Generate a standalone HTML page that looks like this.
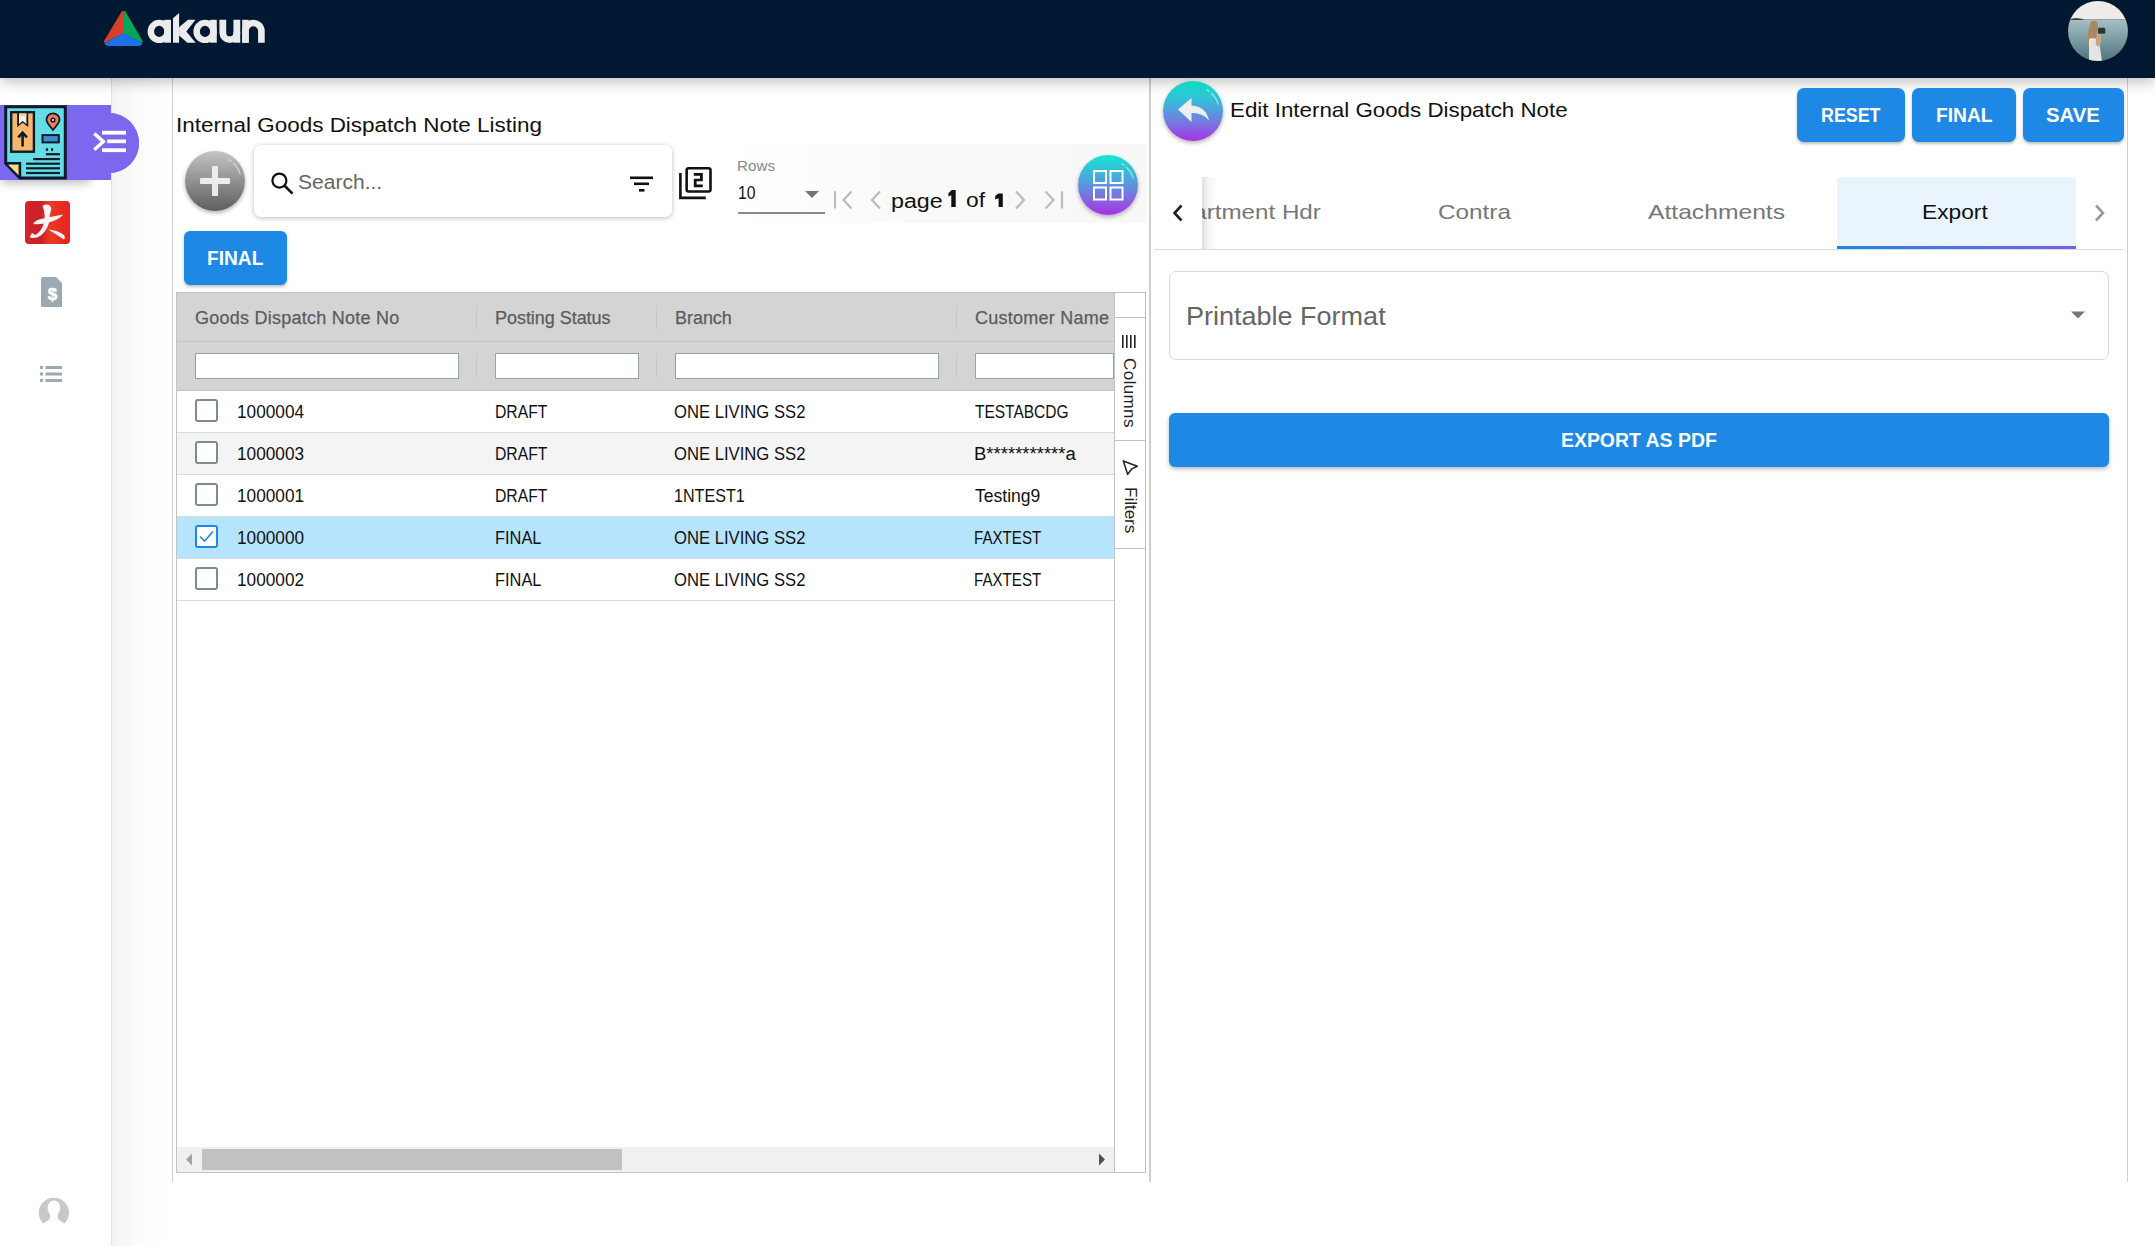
<!DOCTYPE html>
<html><head><meta charset="utf-8">
<style>
*{box-sizing:border-box;margin:0;padding:0}
html,body{width:2155px;height:1246px;overflow:hidden;background:#fff;font-family:"Liberation Sans",sans-serif}
.a{position:absolute}
.t{position:absolute;white-space:nowrap;line-height:1}
.hd{font-size:18px;color:#5c5c5c;-webkit-text-stroke:.25px #5c5c5c}
.cl{font-size:18px;color:#111;transform-origin:0 0}
</style></head><body>

<!-- background gradient strip right of sidebar -->
<div class="a" style="left:112px;top:78px;width:60px;height:1168px;background:linear-gradient(to right,#f4f4f4,#fbfbfb 40%,#fff)"></div>

<!-- left panel border -->
<div class="a" style="left:172px;top:78px;width:1px;height:1104px;background:#d0d0d0"></div>
<!-- split divider -->
<div class="a" style="left:1149px;top:78px;width:2px;height:1104px;background:#cfcfcf"></div>
<!-- right panel border -->
<div class="a" style="left:2127px;top:78px;width:1px;height:1104px;background:#d0d0d0"></div>

<!-- SIDEBAR -->
<div class="a" style="left:0;top:78px;width:112px;height:1168px;background:#fff;border-right:1px solid #e2e2e2"></div>

<!-- HEADER -->
<div class="a" style="left:0;top:0;width:2155px;height:78px;background:#011833;box-shadow:0 3px 14px rgba(0,0,0,.28)"></div>


<!-- LOGO -->
<svg class="a" style="left:0;top:0" width="300" height="78" viewBox="0 0 300 78">
  <g stroke-linejoin="round" stroke-width="2.2">
    <path d="M122.6,12 L122.9,32.2 L105,41.6 Z" fill="#d6402c" stroke="#d6402c"/>
    <path d="M124.4,12 L141.6,41.6 L124.1,32.2 Z" fill="#08a65c" stroke="#08a65c"/>
    <path d="M123.5,34.2 L141.2,43.6 Q139.8,45 137.5,45 L109.5,45 Q107.2,45 105.8,43.6 Z" fill="#1b72e8" stroke="#1b72e8"/>
  </g>
</svg>
<svg class="a" style="left:0;top:0" width="300" height="78" viewBox="0 0 300 78">
  <g fill="#ebebeb">
    <path fill-rule="evenodd" d="M147.6,31.4 A11.7,11.7 0 1 0 171,31.4 A11.7,11.7 0 1 0 147.6,31.4 Z M154.1,31.4 A5.1,5.6 0 1 0 164.3,31.4 A5.1,5.6 0 1 0 154.1,31.4 Z"/>
    <rect x="164.2" y="19.8" width="6.8" height="22.9"/>
    <path d="M173,18.2 L179.1,13 L179.1,42.7 L173,42.7 Z"/>
    <path d="M179.1,27.3 L187.9,19.8 L195.5,19.8 L186.3,31.4 L195.7,42.7 L187.3,42.7 L179.1,35.5 Z"/>
    <path fill-rule="evenodd" d="M193.4,31.4 A11.7,11.7 0 1 0 216.8,31.4 A11.7,11.7 0 1 0 193.4,31.4 Z M199.9,31.4 A5.1,5.6 0 1 0 210.1,31.4 A5.1,5.6 0 1 0 199.9,31.4 Z"/>
    <rect x="210.1" y="19.8" width="6.7" height="22.9"/>
    <path d="M222.8,19.8 V32.7 A7,7 0 0 0 236.85,32.7 V19.8" fill="none" stroke="#ebebeb" stroke-width="6.8"/>
    <rect x="233.45" y="32" width="6.8" height="10.7"/>
    <path d="M245.45,42.7 V31 A7.97,7.97 0 0 1 261.4,31 V42.7" fill="none" stroke="#ebebeb" stroke-width="6.6"/>
    <rect x="242.2" y="19.8" width="6.5" height="22.9"/>
  </g>
</svg>

<!-- AVATAR -->
<svg class="a" style="left:2068px;top:1px" width="60" height="60" viewBox="0 0 60 60">
  <defs>
    <clipPath id="avc"><circle cx="30" cy="30" r="30"/></clipPath>
    <linearGradient id="sea" x1="0" y1="0" x2="0" y2="1"><stop offset="0" stop-color="#a7bec3"/><stop offset=".45" stop-color="#7e9ea5"/><stop offset="1" stop-color="#4e737c"/></linearGradient>
  </defs>
  <g clip-path="url(#avc)">
    <rect x="0" y="0" width="60" height="18.5" fill="#efebe7"/>
    <rect x="0" y="18.5" width="60" height="42" fill="url(#sea)"/>
    <path d="M1,19 Q6,16.3 10,17.2 Q14,17.5 16,19 Z" fill="#2f4744"/>
    <path d="M23,20.5 Q27,18.5 29.5,21.5 L30,27 L27.5,39 L23,47 L19.5,45 Q19,31 23,20.5 Z" fill="#a8895f"/>
    <path d="M21,38 Q26,35 31,40 L34,60 H21 Z" fill="#e6e4e2"/>
    <path d="M29,31 L32.6,31.5 L33.5,41 L30,46 L27.5,43 Z" fill="#c9a183"/>
    <rect x="30" y="26.8" width="7.3" height="6" rx="1.5" fill="#263638"/>
  </g>
</svg>
</div>

<!-- SIDEBAR ITEMS -->
<div class="a" style="left:79px;top:113px;width:60px;height:60px;border-radius:50%;background:#7b68ee"></div>
<div class="a" style="left:0;top:110px;width:92px;height:70px;box-shadow:0 5px 9px -2px rgba(0,0,0,.28)"></div>
<div class="a" style="left:0;top:105px;width:111px;height:75px;background:#7b68ee"></div>
<div class="a" style="left:79px;top:113px;width:60px;height:60px;border-radius:50%;background:#7b68ee"></div>
<svg class="a" style="left:0;top:100px" width="140" height="85" viewBox="0 100 140 85">
  <!-- doc -->
  <path d="M5.7,106.7 H65.3 V178.1 H19.9 L5.7,163.3 Z" fill="#66dde5" stroke="#0d1b2a" stroke-width="3" stroke-linejoin="miter"/>
  <path d="M7.9,164.6 H19.4 V176 Z" fill="#f9d98a"/>
  <path d="M5.7,163.3 H19.9 V178.1" fill="none" stroke="#0d1b2a" stroke-width="2.6"/>
  <rect x="11.2" y="112.2" width="22.7" height="39.5" fill="#f8b76e" stroke="#0d1b2a" stroke-width="2.4"/>
  <path d="M17.2,113 H28.2 V127 L22.7,122.8 L17.2,127 Z" fill="#0d1b2a"/>
  <path d="M19,113.5 H26.4 V124 L22.7,121 L19,124 Z" fill="#fbefd5"/>
  <rect x="19" y="113.5" width="7.4" height="2.6" fill="#fcd884"/>
  <path d="M22.6,146.5 V134" stroke="#0d1b2a" stroke-width="2.6"/>
  <path d="M18.3,137.3 L22.6,132.6 L26.9,137.3" fill="none" stroke="#0d1b2a" stroke-width="2.6"/>
  <path d="M53,130 C50,126 46.5,123 46.5,119.8 A6.5,6.5 0 0 1 59.5,119.8 C59.5,123 56,126 53,130 Z" fill="#f07c5a" stroke="#0d1b2a" stroke-width="1.8"/>
  <circle cx="53" cy="120" r="2.6" fill="#0d1b2a"/><circle cx="53" cy="120" r="1" fill="#fff"/>
  <rect x="42.5" y="135.1" width="16.3" height="7.3" fill="#3d8bd4" stroke="#0d1b2a" stroke-width="2"/>
  <rect x="45.9" y="148.3" width="2.2" height="2.6" fill="#0d1b2a"/><rect x="51" y="148.3" width="2.2" height="2.6" fill="#0d1b2a"/>
  <g fill="#0d1b2a">
  <rect x="45.9" y="153.1" width="14.1" height="2.2"/>
  <rect x="33.1" y="158" width="26.9" height="2.2"/>
  <rect x="26" y="162.6" width="34" height="2.2"/>
  <rect x="26" y="167.2" width="34" height="2.2"/>
  <rect x="26" y="171.9" width="34" height="2.2"/>
  </g>
  <!-- menu icon -->
  <path d="M94.2,133.5 L103.4,141.6 L94.2,149.8" fill="none" stroke="#fff" stroke-width="3.4"/>
  <rect x="102" y="130.8" width="24" height="3.8" fill="#fff"/>
  <rect x="107.2" y="139.5" width="18.8" height="3.7" fill="#fff"/>
  <rect x="102" y="148.3" width="24" height="3.8" fill="#fff"/>
</svg>

<!-- red app icon -->
<svg class="a" style="left:25px;top:201px" width="45" height="43" viewBox="0 0 45 43">
  <defs><linearGradient id="rg" x1="0" x2="1"><stop offset="0" stop-color="#d4232b"/><stop offset=".35" stop-color="#c9202a"/><stop offset=".55" stop-color="#ea3a25"/><stop offset="1" stop-color="#e8221f"/></linearGradient></defs>
  <rect x="0" y="0" width="45" height="43" rx="4" fill="url(#rg)"/>
  <g fill="#f4f2f2">
    <path d="M17.5,5 Q21,2.6 24.2,4.2 Q27.3,6.5 25.8,10 Q24.6,13 24.6,18 Q23.6,28 16,34.5 Q11,37.8 5.3,36.8 Q4.4,35.6 5.8,34 Q6.8,31.6 7.6,32.2 Q8.6,34 11.2,33.6 Q17.6,29 19.4,20 Q20.4,12 17.5,5 Z"/>
    <path d="M8.2,23 Q9.6,19.4 16,18 Q28,15.2 38.3,13.6 Q33.5,19.2 24,21.6 Q15,24 8.2,23 Z"/>
    <path d="M23.2,28.4 Q33,29.2 39.2,34.2 Q40.8,38.2 38.4,38.3 Q31,33 23.2,28.4 Z"/>
  </g>
</svg>

<!-- $ doc icon -->
<svg class="a" style="left:41px;top:277px" width="21" height="30" viewBox="0 0 21 30">
  <path d="M1.5,0 H15 L21,6 V30 H1.5 Q0,30 0,28.5 V1.5 Q0,0 1.5,0 Z" fill="#9aa9b3"/>
  <text x="11.5" y="23" font-family="Liberation Sans" font-weight="700" font-size="17" fill="#fff" stroke="#fff" stroke-width=".5" text-anchor="middle">$</text>
</svg>

<!-- list icon -->
<svg class="a" style="left:40px;top:366px" width="22" height="17" viewBox="0 0 22 17">
  <g fill="#9aa9b3">
    <rect x="0" y="0" width="3" height="3"/><rect x="5.5" y="0" width="16.5" height="3"/>
    <rect x="0" y="6.5" width="3" height="3"/><rect x="5.5" y="6.5" width="16.5" height="3"/>
    <rect x="0" y="13" width="3" height="3"/><rect x="5.5" y="13" width="16.5" height="3"/>
  </g>
</svg>

<!-- user icon -->
<svg class="a" style="left:38px;top:1196px" width="32" height="32" viewBox="0 0 32 32">
  <circle cx="15.9" cy="16.8" r="15.1" fill="#c8c8c8"/>
  <rect x="0" y="27.3" width="32" height="5" fill="#fff"/>
  <ellipse cx="15.9" cy="12" rx="6.35" ry="7.4" fill="#fff"/>
  <path d="M11.6,15 L20.2,15 L19.6,21 L20.6,23.8 L27.5,27.9 L4.3,27.9 L11.2,23.8 L12.2,21 Z" fill="#fff"/>
</svg>

<!-- LEFT PANEL CONTENT -->
<div class="t" style="left:175.9px;top:115px;font-size:20px;color:#111;transform-origin:0 0;transform:scaleX(1.1235)">Internal Goods Dispatch Note Listing</div>

<!-- plus button -->
<div class="a" style="left:185px;top:151px;width:60px;height:60px;border-radius:50%;background:linear-gradient(#c4c4c4,#5e5e5e);box-shadow:0 2px 4px rgba(0,0,0,.3)">
  <div class="a" style="left:15px;top:27px;width:30px;height:5.5px;background:#ececec;border-radius:1px"></div>
  <div class="a" style="left:27.4px;top:15px;width:5.5px;height:30px;background:#ececec;border-radius:1px"></div>
</div>
<svg class="a" style="left:185px;top:151px" width="60" height="60" viewBox="0 0 60 60"><path d="M43.5,8.6 A25.5,25.5 0 0 1 55.4,23.6" fill="none" stroke="rgba(255,255,255,.55)" stroke-width="1.2" stroke-dasharray="3.5 2.2 40"/></svg>

<!-- search box -->
<div class="a" style="left:254px;top:145px;width:418px;height:72px;background:#fff;border-radius:7px;box-shadow:0 1px 5px rgba(0,0,0,.28)"></div>
<svg class="a" style="left:270px;top:171px" width="26" height="26" viewBox="0 0 26 26"><circle cx="9.4" cy="9.6" r="7" fill="none" stroke="#111" stroke-width="2.2"/><path d="M14.6,14.8 L22.5,22.6" stroke="#111" stroke-width="2.6"/></svg>
<div class="t" style="left:297.95px;top:172px;font-size:20px;color:#666;transform-origin:0 0;transform:scaleX(1.0519)">Search...</div>
<svg class="a" style="left:628px;top:175px" width="28" height="20" viewBox="0 0 28 20"><g fill="#111"><rect x="2" y="1.5" width="23" height="2.6"/><rect x="6" y="7.5" width="15" height="2.6"/><rect x="11" y="14" width="5.5" height="2.6"/></g></svg>
<!-- filter_2 icon -->
<svg class="a" style="left:678px;top:165px" width="36" height="36" viewBox="0 0 36 36"><g fill="none" stroke="#111" stroke-width="2.6"><path d="M2.4,8 V32.9 H27.8"/><rect x="8.65" y="3.2" width="23.85" height="23.3" rx="2"/></g><path d="M15.8,8.1 H24.8 V16.3 H18.6 V19.6 H24.8 V22.3 H15.8 V13.7 H22 V10.8 H15.8 Z" fill="#111"/></svg>

<!-- FINAL button (left) -->
<div class="a" style="left:184px;top:231px;width:103px;height:54px;background:#1e88e5;border-radius:6px;box-shadow:0 2px 3px rgba(0,0,0,.25)"></div>
<div class="t" style="left:207.09px;top:247px;font-size:21px;font-weight:700;color:#fff;transform-origin:0 0;transform:scaleX(0.9117)">FINAL</div>

<!-- paginator -->
<div class="a" style="left:734px;top:144px;width:412px;height:79px;background:linear-gradient(to right,#fff,#f9f9f9 45%,#f8f8f8)"></div>
<div class="t" style="left:737.41px;top:159px;font-size:14px;color:#888;transform-origin:0 0;transform:scaleX(1.0853)">Rows</div>
<div class="t" style="left:737.67px;top:183px;font-size:19px;color:#111;transform-origin:0 0;transform:scaleX(0.8250)">10</div>
<svg class="a" style="left:804px;top:190px" width="16" height="9" viewBox="0 0 16 9"><path d="M1,1 H15 L8,8 Z" fill="#757575"/></svg>
<div class="a" style="left:738px;top:212px;width:87px;height:2px;background:#8a8a8a"></div>
<svg class="a" style="left:830px;top:188px" width="240" height="24" viewBox="0 0 240 24">
  <g fill="none" stroke="#bbb" stroke-width="2.2">
    <path d="M5,3.3 V20.5"/><path d="M21.5,3.6 L13.5,12 L21.5,20.4"/>
    <path d="M50,3.6 L42,12 L50,20.4"/>
    <path d="M186,3.6 L194,12 L186,20.4"/>
    <path d="M215.5,3.6 L223.5,12 L215.5,20.4"/><path d="M232,3.3 V20.5"/>
  </g>
</svg>
<div class="t" style="left:890.84px;top:191px;font-size:20px;color:#111;transform-origin:0 0;transform:scaleX(1.1628)">page</div>
<svg class="a" style="left:0;top:0;overflow:visible" width="1" height="1"><path d="M948.4,193.2 L951.8,190 H955.7 V207 H951.3 V195.2 L948.4,196.4 Z" fill="#111"/></svg>
<div class="t" style="left:965.56px;top:190px;font-size:20px;color:#111;transform-origin:0 0;transform:scaleX(1.1375)">of</div>
<svg class="a" style="left:0;top:0;overflow:visible" width="1" height="1"><path d="M995.2,196 L998.3,193.4 H1002.8 V207 H998.6 V198.2 L995.2,199.4 Z" fill="#111"/></svg>

<!-- grid circle -->
<div class="a" style="left:1078px;top:155px;width:60px;height:60px;border-radius:50%;background:linear-gradient(#12e8d0,#4aa7dc 40%,#7d6fe0 70%,#a930e6);box-shadow:0 2px 4px rgba(0,0,0,.3)"></div>
<svg class="a" style="left:1078px;top:155px" width="60" height="60" viewBox="0 0 60 60">
  <g fill="none" stroke="#fff" stroke-width="2"><rect x="16" y="16" width="12" height="12"/><rect x="32.5" y="16" width="12" height="12"/><rect x="16" y="32.5" width="12" height="12"/><rect x="32.5" y="32.5" width="12" height="12"/></g>
  <path d="M43.5,8.6 A25.5,25.5 0 0 1 55.4,23.6" fill="none" stroke="rgba(255,255,255,.55)" stroke-width="1.2" stroke-dasharray="3.5 2.2 40"/>
</svg>

<!-- TABLE -->
<div class="a" style="left:176px;top:292px;width:970px;height:881px;border:1px solid #bdc3c7;background:#fff"></div>
<div class="a" style="left:177px;top:293px;width:937px;height:97px;background:#d4d4d4"></div>
<div class="a" style="left:177px;top:341px;width:937px;height:1px;background:#bdc3c7"></div>
<div class="a" style="left:177px;top:390px;width:937px;height:1px;background:#bdc3c7"></div>
<div class="a" style="left:476px;top:305px;width:1px;height:24px;background:#c4c8ca"></div>
<div class="a" style="left:476px;top:354px;width:1px;height:24px;background:#c4c8ca"></div>
<div class="a" style="left:656px;top:305px;width:1px;height:24px;background:#c4c8ca"></div>
<div class="a" style="left:656px;top:354px;width:1px;height:24px;background:#c4c8ca"></div>
<div class="a" style="left:956px;top:305px;width:1px;height:24px;background:#c4c8ca"></div>
<div class="a" style="left:956px;top:354px;width:1px;height:24px;background:#c4c8ca"></div>
<div class="t hd" style="left:195px;top:309px;letter-spacing:0.25px">Goods Dispatch Note No</div>
<div class="t hd" style="left:495px;top:309px;letter-spacing:-0.04px">Posting Status</div>
<div class="t hd" style="left:675px;top:309px;letter-spacing:-0.04px">Branch</div>
<div class="t hd" style="left:975px;top:309px;letter-spacing:0.25px">Customer Name</div>
<div class="a" style="left:195px;top:353px;width:264px;height:26px;background:#fff;border:1px solid #95a5a6"></div>
<div class="a" style="left:495px;top:353px;width:144px;height:26px;background:#fff;border:1px solid #95a5a6"></div>
<div class="a" style="left:675px;top:353px;width:264px;height:26px;background:#fff;border:1px solid #95a5a6"></div>
<div class="a" style="left:975px;top:353px;width:139px;height:26px;background:#fff;border:1px solid #95a5a6"></div>
<div class="a" style="left:177px;top:391px;width:937px;height:41px;background:#fff"></div>
<div class="a" style="left:177px;top:432px;width:937px;height:1px;background:#d9dcde"></div>
<div class="a" style="left:195px;top:399px;width:23px;height:23px;border:2px solid #7f8c8d;border-radius:3px;background:#fff"></div>
<div class="t cl" style="left:237.04px;top:403px;transform:scaleX(0.9565)">1000004</div>
<div class="t cl" style="left:494.63px;top:403px;transform:scaleX(0.8729)">DRAFT</div>
<div class="t cl" style="left:673.68px;top:403px;transform:scaleX(0.9250)">ONE LIVING SS2</div>
<div class="t cl" style="left:975.30px;top:403px;transform:scaleX(0.8602)">TESTABCDG</div>
<div class="a" style="left:177px;top:433px;width:937px;height:41px;background:#f4f4f4"></div>
<div class="a" style="left:177px;top:474px;width:937px;height:1px;background:#d9dcde"></div>
<div class="a" style="left:195px;top:441px;width:23px;height:23px;border:2px solid #7f8c8d;border-radius:3px;background:#fff"></div>
<div class="t cl" style="left:237.04px;top:445px;transform:scaleX(0.9565)">1000003</div>
<div class="t cl" style="left:494.63px;top:445px;transform:scaleX(0.8729)">DRAFT</div>
<div class="t cl" style="left:673.68px;top:445px;transform:scaleX(0.9250)">ONE LIVING SS2</div>
<div class="t cl" style="left:974.27px;top:445px;transform:scaleX(1.0276)">B***********a</div>
<div class="a" style="left:177px;top:475px;width:937px;height:41px;background:#fff"></div>
<div class="a" style="left:177px;top:516px;width:937px;height:1px;background:#d9dcde"></div>
<div class="a" style="left:195px;top:483px;width:23px;height:23px;border:2px solid #7f8c8d;border-radius:3px;background:#fff"></div>
<div class="t cl" style="left:237.04px;top:487px;transform:scaleX(0.9565)">1000001</div>
<div class="t cl" style="left:494.63px;top:487px;transform:scaleX(0.8729)">DRAFT</div>
<div class="t cl" style="left:673.71px;top:487px;transform:scaleX(0.8948)">1NTEST1</div>
<div class="t cl" style="left:975.30px;top:487px;transform:scaleX(0.9742)">Testing9</div>
<div class="a" style="left:177px;top:517px;width:937px;height:41px;background:#b7e4fd"></div>
<div class="a" style="left:177px;top:558px;width:937px;height:1px;background:#d9dcde"></div>
<div class="a" style="left:195px;top:525px;width:23px;height:23px;border:2px solid #1e88e5;border-radius:3px;background:#fff"></div>
<svg class="a" style="left:195px;top:525px" width="23" height="23" viewBox="0 0 23 23"><path d="M5,11.5 L9.5,16 L18,6.5" fill="none" stroke="#1e88e5" stroke-width="1.6"/></svg>
<div class="t cl" style="left:237.04px;top:529px;transform:scaleX(0.9565)">1000000</div>
<div class="t cl" style="left:494.59px;top:529px;transform:scaleX(0.9100)">FINAL</div>
<div class="t cl" style="left:673.68px;top:529px;transform:scaleX(0.9250)">ONE LIVING SS2</div>
<div class="t cl" style="left:974.46px;top:529px;transform:scaleX(0.8405)">FAXTEST</div>
<div class="a" style="left:177px;top:559px;width:937px;height:41px;background:#fff"></div>
<div class="a" style="left:177px;top:600px;width:937px;height:1px;background:#d9dcde"></div>
<div class="a" style="left:195px;top:567px;width:23px;height:23px;border:2px solid #7f8c8d;border-radius:3px;background:#fff"></div>
<div class="t cl" style="left:237.04px;top:571px;transform:scaleX(0.9565)">1000002</div>
<div class="t cl" style="left:494.59px;top:571px;transform:scaleX(0.9100)">FINAL</div>
<div class="t cl" style="left:673.68px;top:571px;transform:scaleX(0.9250)">ONE LIVING SS2</div>
<div class="t cl" style="left:974.46px;top:571px;transform:scaleX(0.8405)">FAXTEST</div>

<div class="a" style="left:1114px;top:293px;width:1px;height:879px;background:#bdc3c7"></div>
<div class="a" style="left:1115px;top:317px;width:30px;height:1px;background:#bdc3c7"></div>
<div class="a" style="left:1115px;top:440px;width:30px;height:1px;background:#bdc3c7"></div>
<div class="a" style="left:1115px;top:548px;width:30px;height:1px;background:#bdc3c7"></div>
<svg class="a" style="left:1120px;top:333px" width="20" height="18" viewBox="0 0 20 18"><g fill="#222"><rect x="2" y="2" width="1.6" height="13"/><rect x="6" y="2" width="1.6" height="13"/><rect x="10" y="2" width="1.6" height="13"/><rect x="14" y="2" width="1.6" height="13"/></g></svg>
<div class="t" style="left:1138px;top:358px;font-size:17px;color:#222;letter-spacing:.4px;transform-origin:0 0;transform:rotate(90deg)">Columns</div>
<svg class="a" style="left:1120px;top:458px" width="20" height="20" viewBox="0 0 20 20"><path d="M3.3,3 L17.3,8.3 L12.2,10.6 L7.6,16.2 Z" fill="none" stroke="#222" stroke-width="1.5" stroke-linejoin="round"/></svg>
<div class="t" style="left:1139px;top:487px;font-size:17px;color:#222;transform-origin:0 0;transform:rotate(90deg)">Filters</div>

<!-- h scrollbar -->
<div class="a" style="left:177px;top:1147px;width:937px;height:25px;background:#f0f0f0"></div>
<div class="a" style="left:202px;top:1149px;width:420px;height:21px;background:#c1c1c1"></div>
<svg class="a" style="left:184px;top:1152px" width="10" height="15" viewBox="0 0 10 15"><path d="M8,1.5 V13.5 L2,7.5 Z" fill="#a3a3a3"/></svg>
<svg class="a" style="left:1097px;top:1152px" width="10" height="15" viewBox="0 0 10 15"><path d="M2,1.5 V13.5 L8,7.5 Z" fill="#505050"/></svg>

<!-- RIGHT PANEL -->
<div class="a" style="left:1163px;top:81px;width:60px;height:60px;border-radius:50%;background:linear-gradient(#0fd9bf,#2cc8d6 25%,#4aa6de 45%,#7877e0 70%,#a930e6);box-shadow:0 2px 4px rgba(0,0,0,.3)"></div>
<svg class="a" style="left:1163px;top:81px" width="60" height="60" viewBox="0 0 60 60">
  <path d="M15,28.5 L28.5,17 V24.5 Q43,25.5 46,39.5 Q40,31.5 28.5,32 V41 Z" fill="#efefef"/>
  <path d="M43.5,8.6 A25.5,25.5 0 0 1 55.4,23.6" fill="none" stroke="rgba(255,255,255,.55)" stroke-width="1.2" stroke-dasharray="3.5 2.2 40"/>
</svg>
<div class="t" style="left:1229.87px;top:99px;font-size:21px;color:#111;transform-origin:0 0;transform:scaleX(1.0635)">Edit Internal Goods Dispatch Note</div>

<div class="a" style="left:1797px;top:88px;width:108px;height:54px;background:#1e88e5;border-radius:7px;box-shadow:0 2px 3px rgba(0,0,0,.25)"></div>
<div class="a" style="left:1912px;top:88px;width:104px;height:54px;background:#1e88e5;border-radius:7px;box-shadow:0 2px 3px rgba(0,0,0,.25)"></div>
<div class="a" style="left:2023px;top:88px;width:101px;height:54px;background:#1e88e5;border-radius:7px;box-shadow:0 2px 3px rgba(0,0,0,.25)"></div>
<div class="t" style="left:1820.55px;top:104px;font-size:21px;font-weight:700;color:#fff;transform-origin:0 0;transform:scaleX(0.8493)">RESET</div>
<div class="t" style="left:1935.69px;top:104px;font-size:21px;font-weight:700;color:#fff;transform-origin:0 0;transform:scaleX(0.9133)">FINAL</div>
<div class="t" style="left:2046.03px;top:104px;font-size:21px;font-weight:700;color:#fff;transform-origin:0 0;transform:scaleX(0.9685)">SAVE</div>

<!-- tabs -->
<div class="a" style="left:1154px;top:249px;width:970px;height:1px;background:#dcdcdc"></div>
<div class="a" style="left:1837px;top:177px;width:239px;height:69px;background:#e9f4fd"></div>
<div class="a" style="left:1837px;top:246px;width:239px;height:3px;background:linear-gradient(to right,#1e88e5,#7b5ce8)"></div>
<div class="t" style="left:1149.15px;top:201px;font-size:21px;color:#777;transform-origin:0 0;transform:scaleX(1.1500);clip-path:inset(-5px -5px -5px 46px)">Department Hdr</div>
<div class="t" style="left:1438.34px;top:201px;font-size:21px;color:#777;transform-origin:0 0;transform:scaleX(1.1581)">Contra</div>
<div class="t" style="left:1648.00px;top:201px;font-size:21px;color:#777;transform-origin:0 0;transform:scaleX(1.1741)">Attachments</div>
<div class="t" style="left:1922.33px;top:201px;font-size:21px;color:#111;transform-origin:0 0;transform:scaleX(1.0831)">Export</div>
<div class="a" style="left:1151px;top:177px;width:51px;height:72px;background:#fff"></div>
<div class="a" style="left:1202px;top:177px;width:16px;height:72px;background:linear-gradient(to right,rgba(0,0,0,.13),rgba(0,0,0,.04) 40%,rgba(0,0,0,0))"></div>
<svg class="a" style="left:1168px;top:202px" width="20" height="22" viewBox="0 0 20 22"><path d="M13.5,3.5 L6.5,11 L13.5,18.5" fill="none" stroke="#222" stroke-width="2.6"/></svg>
<svg class="a" style="left:2090px;top:202px" width="20" height="22" viewBox="0 0 20 22"><path d="M6,3.5 L13,11 L6,18.5" fill="none" stroke="#999" stroke-width="2.6"/></svg>

<!-- printable format -->
<div class="a" style="left:1169px;top:271px;width:940px;height:89px;border:1px solid #dadada;border-radius:7px;background:#fff"></div>
<div class="t" style="left:1185.54px;top:304px;font-size:25px;color:#666;transform-origin:0 0;transform:scaleX(1.0803)">Printable Format</div>
<svg class="a" style="left:2070px;top:310px" width="16" height="10" viewBox="0 0 16 10"><path d="M1,1.5 H15 L8,8.5 Z" fill="#757575"/></svg>

<!-- export button -->
<div class="a" style="left:1169px;top:413px;width:940px;height:54px;background:#1e88e5;border-radius:6px;box-shadow:0 2px 4px rgba(0,0,0,.28)"></div>
<div class="t" style="left:1560.87px;top:429px;font-size:21px;font-weight:700;color:#fff;transform-origin:0 0;transform:scaleX(0.9251)">EXPORT AS PDF</div>
</body></html>
